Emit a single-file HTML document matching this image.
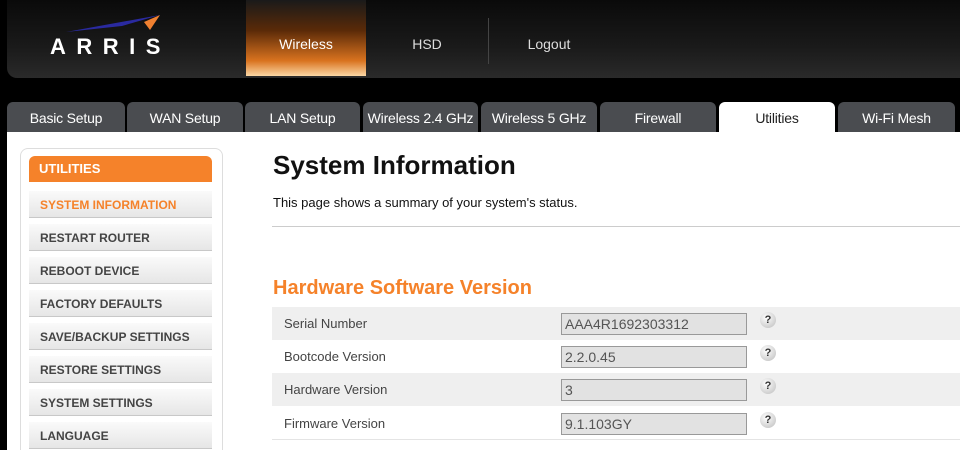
<!DOCTYPE html>
<html style="width:960px;height:450px;overflow:hidden"><head><style>
*{margin:0;padding:0;box-sizing:border-box}
body{width:960px;height:450px;overflow:hidden;background:#000;font-family:"Liberation Sans",Arial,sans-serif;position:relative}
.hdr{position:absolute;left:7px;top:0;width:953px;height:78px;background:linear-gradient(#0a0a0a,#1a1a1a 60%,#2a2a2a);border-radius:0 0 0 10px}
.logo{position:absolute;left:50px;top:34px;color:#fff;font-size:22px;font-weight:bold;letter-spacing:10.5px}
.nav{position:absolute;top:0;height:76px;color:#ddd;font-size:14px;text-align:center;line-height:88px}
.act{background:linear-gradient(#1a1a1a 0%,#5a2a08 40%,#d9731f 80%,#fbd7a4 100%);color:#fff}
.sep{position:absolute;top:18px;width:1px;height:46px;background:#444}
.tab{position:absolute;top:102px;height:30px;background:#4a4c50;color:#fff;font-size:14px;text-align:center;line-height:32px;border-radius:6px 6px 0 0;letter-spacing:-0.2px}
.tab.on{background:#fff;color:#222}
.main{position:absolute;left:7px;top:132px;width:953px;height:318px;background:#fff}
.side{position:absolute;left:20px;top:148px;width:203px;height:302px;border:1px solid #ddd;border-bottom:none;border-radius:8px 8px 0 0;background:#fff}
.sh{position:absolute;left:29px;top:156px;width:183px;height:26px;background:#f5822a;border-radius:6px 6px 0 0;color:#fff;font-weight:bold;font-size:13px;line-height:26px;padding-left:10px}
.si{position:absolute;left:29px;width:183px;height:27px;background:linear-gradient(#fafafa,#e6e6e6);border-bottom:1px solid #c8c8c8;color:#444;font-weight:bold;font-size:12px;line-height:28px;padding-left:11px}
.row{position:absolute;left:272px;width:688px;height:33px;font-size:13px;color:#444;line-height:33px;padding-left:12px}
.inp{position:absolute;left:289px;top:6px;width:186px;height:22px;background:#e2e2e2;border:1px solid #999;line-height:20px;font-size:14px;padding-left:3px;color:#555}
.q{position:absolute;left:488px;top:5px;width:16px;height:16px;border-radius:50%;background:radial-gradient(circle at 40% 35%,#fff,#bbb);color:#333;font-size:11px;font-weight:bold;line-height:16px;text-align:center;padding:0}
</style></head><body>
<div class="hdr"></div>
<svg style="position:absolute;left:60px;top:12px" width="105" height="22"><path d="M6 20 L100 3 L62 14 Z" fill="#2a2aa0"/><path d="M84 10 L100 3 L90 18 Z" fill="#f08030"/></svg>
<div class="logo">ARRIS</div>
<div class="nav act" style="left:246px;width:120px">Wireless</div>
<div class="nav" style="left:367px;width:120px">HSD</div>
<div class="sep" style="left:488px"></div>
<div class="nav" style="left:489px;width:120px">Logout</div>
<div class="tab" style="left:7px;width:118px">Basic Setup</div>
<div class="tab" style="left:127px;width:116px">WAN Setup</div>
<div class="tab" style="left:245px;width:115px">LAN Setup</div>
<div class="tab" style="left:363px;width:115px">Wireless 2.4 GHz</div>
<div class="tab" style="left:481px;width:116px">Wireless 5 GHz</div>
<div class="tab" style="left:600px;width:116px">Firewall</div>
<div class="tab on" style="left:719px;width:116px">Utilities</div>
<div class="tab" style="left:838px;width:117px">Wi-Fi Mesh</div>
<div class="main"></div>
<div class="side"></div>
<div class="sh">UTILITIES</div>
<div class="si" style="top:191px;color:#f5822a">SYSTEM INFORMATION</div>
<div class="si" style="top:224px">RESTART ROUTER</div>
<div class="si" style="top:257px">REBOOT DEVICE</div>
<div class="si" style="top:290px">FACTORY DEFAULTS</div>
<div class="si" style="top:323px">SAVE/BACKUP SETTINGS</div>
<div class="si" style="top:356px">RESTORE SETTINGS</div>
<div class="si" style="top:389px">SYSTEM SETTINGS</div>
<div class="si" style="top:422px">LANGUAGE</div>
<div style="position:absolute;left:273px;top:150px;font-size:26px;font-weight:bold;color:#111">System Information</div>
<div style="position:absolute;left:273px;top:195px;font-size:13px;color:#111">This page shows a summary of your system's status.</div>
<div style="position:absolute;left:272px;top:226px;width:688px;height:1px;background:#ccc"></div>
<div style="position:absolute;left:273px;top:277px;font-size:20px;font-weight:bold;color:#f5822a">Hardware Software Version</div>
<div class="row" style="top:307px;background:#efefef">Serial Number<div class="inp">AAA4R1692303312</div><div class="q">?</div></div>
<div class="row" style="top:340px">Bootcode Version<div class="inp">2.2.0.45</div><div class="q">?</div></div>
<div class="row" style="top:373px;background:#efefef">Hardware Version<div class="inp">3</div><div class="q">?</div></div>
<div class="row" style="top:407px;border-bottom:1px solid #e4e4e4">Firmware Version<div class="inp">9.1.103GY</div><div class="q">?</div></div>
</body></html>
